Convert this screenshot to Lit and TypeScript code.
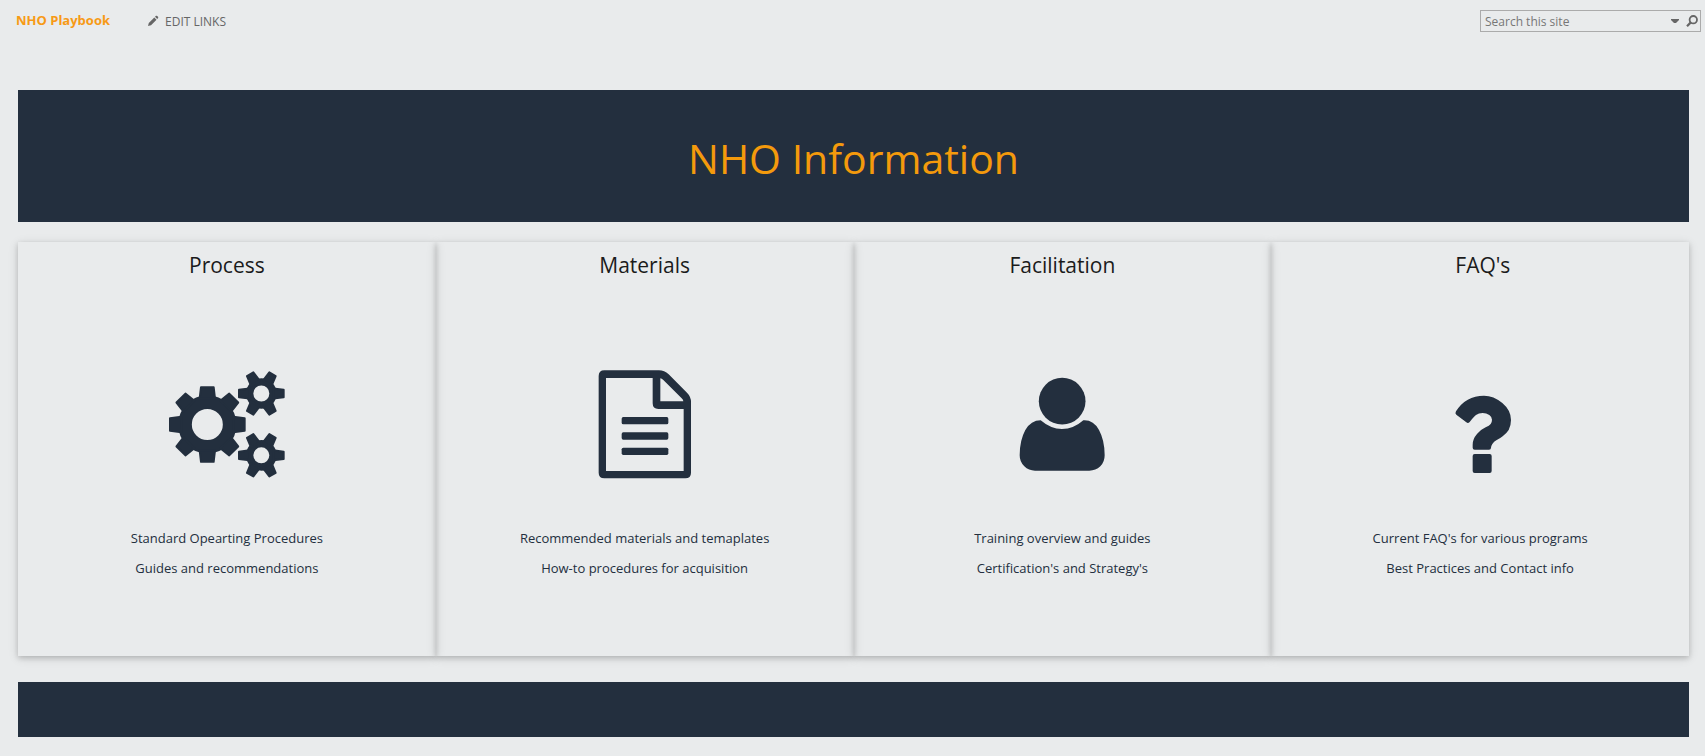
import { LitElement, html, svg, css } from "lit";
import { customElement, property } from "lit/decorators.js";

type IconName = "gears" | "document" | "person" | "question";

interface Tile {
  title: string;
  icon: IconName;
  lines: string[];
}

const TILES: Tile[] = [
  {
    title: "Process",
    icon: "gears",
    lines: ["Standard Opearting Procedures", "Guides and recommendations"],
  },
  {
    title: "Materials",
    icon: "document",
    lines: ["Recommended materials and temaplates", "How-to procedures for acquisition"],
  },
  {
    title: "Facilitation",
    icon: "person",
    lines: ["Training overview and guides", "Certification's and Strategy's"],
  },
  {
    title: "\u00a0FAQ's",
    icon: "question",
    lines: ["Current FAQ's for various programs", "Best Practices and Contact info"],
  },
];

/* A gear is a ring with evenly rotated teeth around its centre. */
const gear = (cx: number, cy: number, teeth: number, tooth: string, ring: number, ringWidth: number) => svg`
  <g transform="translate(${cx} ${cy})">
    <circle r=${ring} fill="none" stroke="currentColor" stroke-width=${ringWidth}></circle>
    ${Array.from({ length: teeth }, (_, i) => svg`
      <path d=${tooth} transform="rotate(${(360 / teeth) * i})"
        fill="currentColor" stroke="currentColor" stroke-width="6" stroke-linejoin="round"></path>`)}
  </g>`;

const BIG_TOOTH = "M-112 -19L-78 -23V23L-112 19Z";
const SMALL_TOOTH = "M-67 -11L-36 -15V15L-67 11Z";

const ICONS = {
  gears: {
    viewBox: "201 387 360 360",
    body: svg`
      ${gear(322, 568.5, 8, BIG_TOOTH, 67, 41)}
      ${gear(484, 475.5, 6, SMALL_TOOTH, 35, 22)}
      ${gear(484, 661, 6, SMALL_TOOTH, 35, 22)}`,
  },
  document: {
    viewBox: "74 72 360 360",
    body: svg`
      <path fill="currentColor" fill-rule="evenodd" d="M132 91H296Q312 91 325 103L380 158Q392 170 392 186V398Q392 415 375 415H132Q115 415 115 398V108Q115 91 132 91Z
        M137 114V393H370V207H294Q277 207 277 190V114Z M300 115V184H369Q369 180 364 175L309 120Q304 115 300 115Z"></path>
      <g fill="currentColor">
        <rect x="184" y="231" width="140" height="22" rx="5"></rect>
        <rect x="184" y="277" width="140" height="22" rx="5"></rect>
        <rect x="184" y="323" width="140" height="22" rx="5"></rect>
      </g>`,
  },
  person: {
    viewBox: "67 72 360 360",
    body: svg`
      <circle cx="247.500" cy="183.500" r="70" fill="currentColor"></circle>
      <path fill="currentColor" d="M183 241Q213 267 247 267Q282 267 311 241Q341 239 358 270Q375 301 375 346Q375 366 362 379Q348 392 329 392H166Q147 392 134 379Q120 366 120 346Q120 301 137 270Q154 241 183 241Z"></path>`,
  },
  question: {
    viewBox: "0 72 360 360",
    body: svg`
      <path fill="currentColor" d="M215 348V393Q215 399 209 399H164Q158 399 158 393V348Q158 342 164 342H209Q215 342 215 348Z
        M273 240Q273 257 266 270Q259 281 248 289Q243 293 229 301Q222 305 217 312Q213 318 213 323Q213 329 207 329H164Q158 329 158 323V314Q158 297 171 282Q183 268 197 262Q208 257 212 252Q216 247 216 239Q216 231 208 225Q199 219 188 219Q176 219 168 225Q162 229 149 246Q144 251 139 247L109 224Q104 221 108 214Q137 167 192 167Q221 167 247 189Q273 211 273 240Z"></path>`,
  },
};

@customElement("info-tile")
class InfoTile extends LitElement {
  @property({ attribute: false }) tile!: Tile;

  static styles = css`
    :host {
      display: flex;
      flex-direction: column;
      align-items: center;
      padding: 8px 16px 72px;
      box-shadow: 0 2px 5px rgba(0, 0, 0, 0.16), 0 2px 10px rgba(0, 0, 0, 0.12);
      text-align: center;
    }
    .title {
      margin: 0;
      font-size: 21px;
      font-weight: 400;
      line-height: 30px;
      color: #1b1b1b;
    }
    .icon {
      width: 120px;
      height: 120px;
      margin: 84px 0 40px;
    }
    .line {
      margin: 0 0 1px;
      font-size: 13px;
      line-height: 29px;
    }
  `;

  render() {
    const { title, icon, lines } = this.tile;
    return html`
      <h2 class="title">${title}</h2>
      <svg class="icon" viewBox=${ICONS[icon].viewBox} aria-hidden="true">${ICONS[icon].body}</svg>
      ${lines.map((line) => html`<p class="line">${line}</p>`)}
    `;
  }
}

@customElement("app-root")
class AppRoot extends LitElement {
  static styles = css`
    :host {
      display: block;
      min-height: 100vh;
      box-sizing: border-box;
      padding-bottom: 19px;
      background: #e9ebec;
      color: #232f3e;
      font-family: "Open Sans", "Noto Sans", sans-serif;
    }
    .top {
      display: flex;
      align-items: center;
      height: 22px;
      padding: 10px 4px 0 16px;
    }
    .brand {
      padding-bottom: 2px;
      font-size: 13px;
      line-height: 20px;
      font-weight: 700;
      color: #f79a16;
      text-decoration: none;
    }
    .edit {
      display: flex;
      align-items: center;
      gap: 6px;
      margin-left: 37px;
      padding: 0;
      border: 0;
      background: none;
      font: inherit;
      font-size: 12px;
      line-height: 22px;
      color: #666;
    }
    .label {
      padding-top: 2px;
    }
    .pencil {
      width: 12px;
      height: 12px;
    }
    .search {
      display: flex;
      align-items: center;
      width: 221px;
      height: 22px;
      box-sizing: border-box;
      margin-left: auto;
      padding: 0 2px 0 4px;
      border: 1px solid #ababab;
      color: #666;
    }
    .field {
      flex: 1;
      min-width: 0;
      padding: 2px 0 0;
      border: 0;
      outline: 0;
      background: none;
      font: inherit;
      font-size: 12px;
      line-height: 18px;
      color: inherit;
    }
    .field::placeholder {
      color: #777;
      opacity: 1;
    }
    .tool {
      display: flex;
      margin-left: 7px;
      padding: 0;
      border: 0;
      background: none;
      color: inherit;
    }
    .caret {
      width: 8px;
      height: 6px;
    }
    .glass {
      width: 12px;
      height: 12px;
    }
    main,
    .foot {
      margin: 0 16px 0 18px;
    }
    .banner {
      display: flex;
      align-items: center;
      justify-content: center;
      margin: 58px 0 20px;
      padding: 40px 16px 36px;
      background: #232f3e;
    }
    .heading {
      margin: 0;
      font-size: 41px;
      line-height: 56px;
      font-weight: 400;
      color: #f49a0c;
    }
    .tiles {
      display: grid;
      grid-template-columns: repeat(4, 1fr);
    }
    .foot {
      height: 55px;
      margin-top: 26px;
      background: #232f3e;
    }
  `;

  render() {
    return html`
      <header class="top">
        <a class="brand" href="#">NHO Playbook</a>
        <button class="edit" type="button">
          <svg class="pencil" viewBox="0 0 12 12" aria-hidden="true">
            <path fill="currentColor" d="M1 11L1.800 8L7.300 2.500L9.500 4.700L4 10.200ZM8 1.800L9 .800Q9.600 .500 10.200 1L11 1.800Q11.500 2.400 11.100 3L10.200 4Z"></path>
          </svg>
          <span class="label">EDIT LINKS</span>
        </button>
        <form class="search" role="search" @submit=${(e: Event) => e.preventDefault()}>
          <input class="field" type="text" aria-label="Search this site" placeholder="Search this site" />
          <button class="tool" type="button" aria-label="Search scope">
            <svg class="caret" viewBox="0 0 8 6"><path fill="currentColor" d="M0 1H8V2L5 5H3L0 2Z"></path></svg>
          </button>
          <button class="tool" type="submit" aria-label="Search">
            <svg class="glass" viewBox="0 0 12 12">
              <circle cx="7.300" cy="4.700" r="3.700" fill="none" stroke="currentColor" stroke-width="1.800"></circle>
              <path d="M4.800 7.400L1 11.200" stroke="currentColor" stroke-width="2.200"></path>
            </svg>
          </button>
        </form>
      </header>
      <main>
        <div class="banner"><h1 class="heading">NHO Information</h1></div>
        <section class="tiles">
          ${TILES.map((tile) => html`<info-tile .tile=${tile}></info-tile>`)}
        </section>
      </main>
      <footer class="foot"></footer>
    `;
  }
}
